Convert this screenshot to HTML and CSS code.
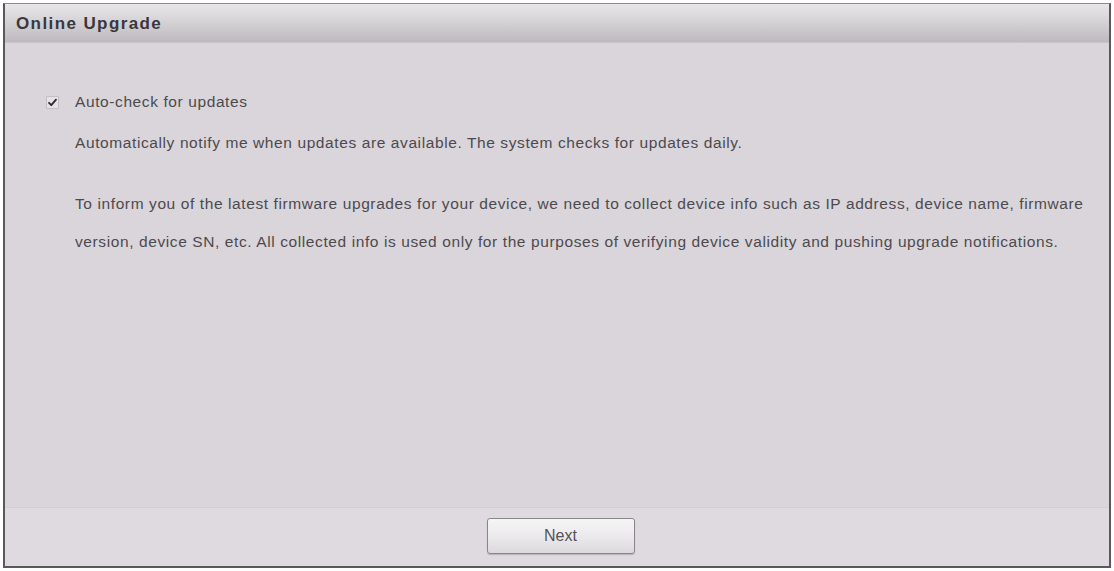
FILE: index.html
```html
<!DOCTYPE html>
<html lang="en">
<head>
    <meta charset="UTF-8">
    <meta name="viewport" content="width=device-width, initial-scale=1.0">
    <title>Online Upgrade</title>
    <link rel="stylesheet" href="styles.css">
</head>
<body>
    <div class="panel">
        <div class="panel-header">Online Upgrade</div>
        <div class="panel-body">
            <label class="check-row">
                <span class="check-box">
                    <svg width="11" height="11" viewBox="0 0 11 11">
                        <path d="M2 5.8 L4.3 8.2 L9 2.6" fill="none" stroke="#2a2a2a" stroke-width="1.8" stroke-linecap="round" stroke-linejoin="round"/>
                    </svg>
                </span>
                <span>Auto-check for updates</span>
            </label>
            <p class="note">Automatically notify me when updates are available. The system checks for updates daily.</p>
            <p class="note privacy">To inform you of the latest firmware upgrades for your device, we need to collect device info such as IP address, device name, firmware<br>version, device SN, etc. All collected info is used only for the purposes of verifying device validity and pushing upgrade notifications.</p>
        </div>
        <div class="panel-footer">
            <button class="btn">Next</button>
        </div>
    </div>
</body>
</html>
```

FILE: styles.css
```css
body {
    margin: 0;
    padding: 3px;
    background: #fff;
    font-family: "Liberation Sans", Arial, sans-serif;
    color: #4d4a4e;
}
.panel {
    width: 1104px;
    height: 562px;
    display: flex;
    flex-direction: column;
    background: #d9d5da;
    border: 2px solid #5a585b;
    border-top: 1px solid #8d8b8e;
}
.panel-header {
    height: 38px;
    line-height: 39px;
    padding-left: 11px;
    font-size: 17px;
    font-weight: bold;
    letter-spacing: 1.4px;
    color: #3a383b;
    background: linear-gradient(#e9e7ea 0%, #d6d3d7 45%, #bdb9be 100%);
    border-bottom: 1px solid #c8c4c9;
}
.panel-body {
    flex: 1;
    padding: 49px 0 0 41px;
    font-size: 15.5px;
    letter-spacing: 0.6px;
}
.check-row {
    display: flex;
    align-items: center;
    height: 20px;
    gap: 16px;
}
.check-box {
    width: 11px;
    height: 11px;
    display: flex;
    align-items: center;
    justify-content: center;
    background: #e6e3e7;
    border: 1px solid #c2bfc3;
    border-radius: 1px;
}
.note {
    margin: 12px 0 0 29px;
    line-height: 38px;
}
.privacy {
    margin-top: 23px;
}
.panel-footer {
    height: 58px;
    display: flex;
    justify-content: center;
    align-items: flex-start;
    padding-left: 7px;
    background: #dedadf;
    border-top: 1px solid #d2ced3;
}
.btn {
    margin-top: 10px;
    width: 148px;
    height: 36px;
    font-family: inherit;
    font-size: 16px;
    color: #555356;
    background: linear-gradient(#f6f5f6 0%, #eceaec 50%, #dcd9dc 100%);
    border: 1px solid #8a878b;
    border-radius: 3px;
    box-shadow: 0 1px 1px #b5b1b6;
    cursor: pointer;
}
```
